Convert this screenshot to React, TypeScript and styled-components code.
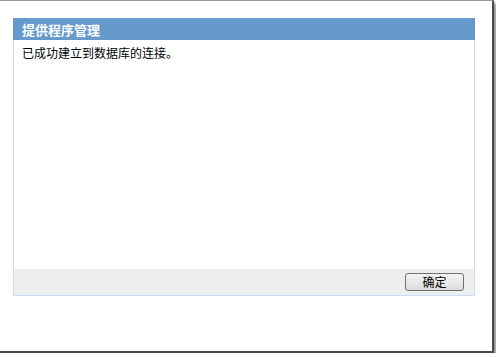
import React from "react";
import styled, { createGlobalStyle } from "styled-components";

const GlobalStyle = createGlobalStyle`
  html, body {
    margin: 0;
    padding: 0;
    background: #ffffff;
  }
  body {
    font-family: "Noto Sans CJK SC", "DejaVu Sans", sans-serif;
    font-size: 12px;
    color: #000000;
  }
`;

const App: React.FC = () => {
  return (
    <>
      <GlobalStyle />
      <Frame>
        <Panel>
          <Header>提供程序管理</Header>
          <Body>已成功建立到数据库的连接。</Body>
          <Footer>
            <Button type="button">确定</Button>
          </Footer>
        </Panel>
      </Frame>
    </>
  );
};

const Frame = styled.div`
  box-sizing: border-box;
  width: 494px;
  height: 353px;
  padding: 17px 0 0 13px;
  background: #ffffff;
  border-top: 1px solid #9a9a9a;
  border-right: 2px solid #4a4a4a;
  border-bottom: 2px solid #4a4a4a;
  box-shadow: 2px 3px 3px rgba(0, 0, 0, 0.5);
`;

const Panel = styled.div`
  box-sizing: border-box;
  width: 462px;
  height: 278px;
  display: flex;
  flex-direction: column;
  border: 1px solid #cadcf0;
  border-top: none;
`;

const Header = styled.div`
  height: 22px;
  margin: 0 -1px 0 -1px;
  padding-left: 9px;
  display: flex;
  align-items: center;
  background: #6699cc;
  color: #ffffff;
  font-weight: bold;
  font-size: 13px;
`;

const Body = styled.div`
  flex: 1;
  padding: 6px 8px;
  line-height: 14px;
`;

const Footer = styled.div`
  height: 26px;
  display: flex;
  align-items: center;
  justify-content: flex-end;
  padding-right: 10px;
  background: #eeeeee;
`;

const Button = styled.button`
  box-sizing: border-box;
  width: 59px;
  height: 18px;
  padding: 0;
  border: 1px solid #707070;
  border-radius: 3px;
  background: linear-gradient(#f4f4f4, #dcdcdc);
  font-family: "Noto Sans CJK SC", sans-serif;
  font-size: 12px;
  line-height: 14px;
  color: #000000;
`;

export default App;
